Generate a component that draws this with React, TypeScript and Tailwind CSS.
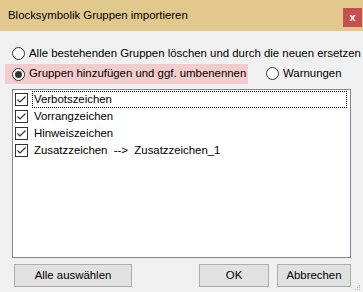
import React from "react";

const FONT = { fontFamily: '"Liberation Sans", Arial, sans-serif' };

function Radio({ checked }: { checked?: boolean }) {
  return (
    <span className="flex h-[13px] w-[13px] shrink-0 items-center justify-center rounded-full border border-[#333] bg-white">
      {checked ? <span className="h-[7px] w-[7px] rounded-full bg-[#333]" /> : null}
    </span>
  );
}

function Check() {
  return (
    <span className="flex h-[13px] w-[13px] shrink-0 items-center justify-center border border-[#333] bg-white">
      <svg width="11" height="11" viewBox="0 0 11 11">
        <path d="M1.5 5.5 L4 8 L9.5 2.5" fill="none" stroke="#333" strokeWidth="1.2" />
      </svg>
    </span>
  );
}

const ITEMS = ["Verbotszeichen", "Vorrangzeichen", "Hinweiszeichen", "Zusatzzeichen  -->  Zusatzzeichen_1"];

export default function App() {
  return (
    <div className="flex h-[292px] w-[363px] flex-col overflow-hidden bg-[#f0f0f0] text-[11.4px] text-black" style={FONT}>
      <div className="flex h-[31px] shrink-0 items-start justify-between bg-[#e1c98e] pl-[8px] pr-[1px]">
        <span className="mt-[7px] text-[11.4px] leading-[16px]">Blocksymbolik Gruppen importieren</span>
        <span className="mt-[8px] flex h-[19px] w-[19px] items-center justify-center bg-[#c84f4f] text-[11px] font-bold leading-none text-white">
          x
        </span>
      </div>

      <div className="flex flex-1 flex-col px-[12px]">
        <div className="mt-[14px] flex h-[16px] items-center gap-[4px]">
          <Radio />
          <span className="whitespace-nowrap leading-[16px]">Alle bestehenden Gruppen löschen und durch die neuen ersetzen</span>
        </div>

        <div className="mt-[3px] flex h-[20px] items-center">
          <div className="-ml-[7px] flex h-[20px] w-[243px] shrink-0 items-center gap-[4px] bg-[#f2cccc] pl-[7px]">
            <Radio checked />
            <span className="whitespace-nowrap">Gruppen hinzufügen und ggf. umbenennen</span>
          </div>
          <div className="ml-[18px] flex items-center gap-[4px]">
            <Radio />
            <span>Warnungen</span>
          </div>
        </div>

        <div className="mt-[5px] flex h-[169px] w-[339px] flex-col border border-[#828790] bg-white pt-[1px]">
          {ITEMS.map((item, i) => (
            <div key={item} className="flex h-[17px] items-center gap-[4px] pl-[2px]">
              <Check />
              <span
                className={
                  "flex h-[17px] flex-1 items-center whitespace-pre pl-[1px] " +
                  (i === 0 ? "mr-[3px] border border-dotted border-black" : "border border-transparent")
                }
              >
                {item}
              </span>
            </div>
          ))}
        </div>

        <div className="mt-[6px] flex items-center">
          <button className="ml-[2px] h-[23px] w-[118px] border border-[#adadad] bg-[#e1e1e1] text-[11.4px]">
            Alle auswählen
          </button>
          <button className="ml-auto h-[23px] w-[70px] border border-[#adadad] bg-[#e1e1e1] text-[11.4px]">OK</button>
          <button className="ml-[8px] h-[23px] w-[74px] border border-[#adadad] bg-[#e1e1e1] text-[11.4px]">
            Abbrechen
          </button>
        </div>
      </div>

      <div className="flex h-0 justify-end">
        <svg width="6" height="6" viewBox="0 0 6 6" className="-mt-[7px] mr-[2px]">
          <rect x="4" y="0" width="1" height="1" fill="#b5b5b5" />
          <rect x="2" y="2" width="1" height="1" fill="#b5b5b5" />
          <rect x="4" y="2" width="1" height="1" fill="#b5b5b5" />
          <rect x="0" y="4" width="1" height="1" fill="#b5b5b5" />
          <rect x="2" y="4" width="1" height="1" fill="#b5b5b5" />
          <rect x="4" y="4" width="1" height="1" fill="#b5b5b5" />
        </svg>
      </div>
    </div>
  );
}
